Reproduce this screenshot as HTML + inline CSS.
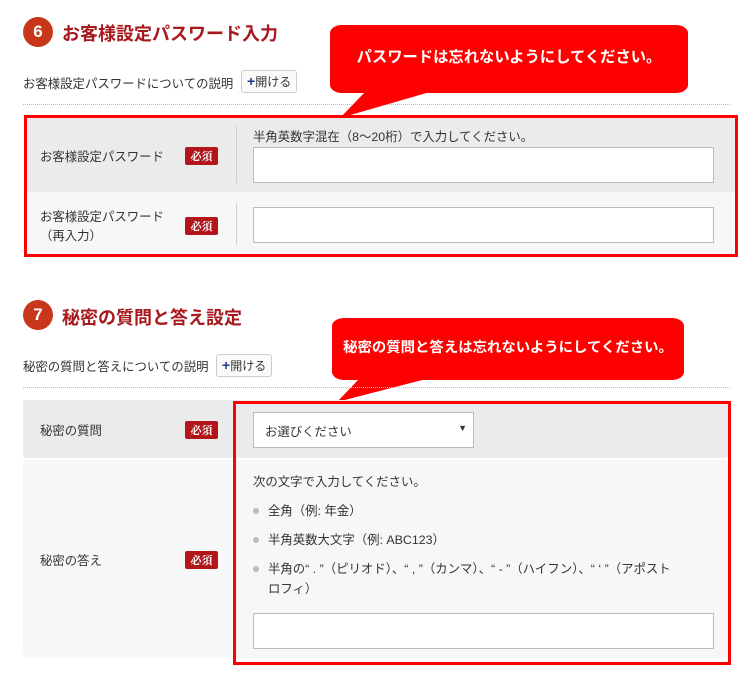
<!DOCTYPE html>
<html><head><meta charset="utf-8"><style>
*{margin:0;padding:0;box-sizing:border-box}
body{width:750px;height:678px;background:#fff;position:relative;overflow:hidden;font-family:"Liberation Sans","Noto Sans CJK JP",sans-serif;color:#333;font-size:12.4px}
.a{position:absolute;white-space:nowrap}
.num{width:30px;height:30px;border-radius:50%;background:#c8371a;color:#fff;font-weight:bold;font-size:17px;text-align:center;line-height:30px}
.ttl{font-size:18px;font-weight:bold;color:#a8191e}
.btn{border:1px solid #ccc;border-radius:3px;background:#fafafa;font-size:12px;height:23px;line-height:21px;padding:0 5px;color:#333}
.btn b{color:#1a3d8f;font-size:14px}
.dot{height:0;border-top:1px dotted #bbb}
.badge{background:#b3161a;color:#fff;font-weight:bold;font-size:11px;width:33px;height:18px;line-height:18px;text-align:center;border-radius:2px;font-family:"Noto Serif CJK SC",serif}
.inp{background:#fff;border:1px solid #bbb}
.red{border:3px solid #f00}
.call{background:#f00;color:#fff;font-weight:bold;text-align:center;border-radius:12px/8px}
.li{padding-left:15px}
.li:before{content:"";position:absolute;left:0;top:7px;width:6px;height:6px;border-radius:50%;background:#bbb}
</style></head><body>
<div class="a num" style="left:23px;top:17px">6</div>
<div class="a ttl" style="left:62px;top:20px">お客様設定パスワード入力</div>
<div class="a" style="left:23px;top:74px">お客様設定パスワードについての説明</div>
<div class="a btn" style="left:241px;top:70px"><b>+</b>開ける</div>
<div class="a dot" style="left:23px;top:104px;width:707px"></div>

<div class="a" style="left:27px;top:118px;width:708px;height:74px;background:#ebebeb"></div>
<div class="a" style="left:27px;top:192px;width:708px;height:62px;background:#f7f7f7"></div>
<div class="a" style="left:236px;top:125px;width:1px;height:58px;background:#d0d0d0"></div>
<div class="a" style="left:236px;top:203px;width:1px;height:42px;background:#d0d0d0"></div>
<div class="a" style="left:40px;top:147px">お客様設定パスワード</div>
<div class="a badge" style="left:185px;top:147px">必須</div>
<div class="a" style="left:253px;top:127px">半角英数字混在（8～20桁）で入力してください。</div>
<div class="a inp" style="left:253px;top:147px;width:461px;height:36px"></div>
<div class="a" style="left:40px;top:207px">お客様設定パスワード</div>
<div class="a" style="left:40px;top:226px">（再入力）</div>
<div class="a badge" style="left:185px;top:217px">必須</div>
<div class="a inp" style="left:253px;top:207px;width:461px;height:36px"></div>
<div class="a red" style="left:24px;top:115px;width:714px;height:142px"></div>

<svg class="a" style="left:0;top:0" width="750" height="678"><polygon points="365,92 430,92 340,118" fill="#f00"/><polygon points="360,378 430,378 337,402" fill="#f00"/></svg>
<div class="a call" style="left:330px;top:25px;width:358px;height:68px;line-height:66px;font-size:15.3px">パスワードは忘れないようにしてください。</div>

<div class="a num" style="left:23px;top:300px">7</div>
<div class="a ttl" style="left:62px;top:304px">秘密の質問と答え設定</div>
<div class="a" style="left:23px;top:357px">秘密の質問と答えについての説明</div>
<div class="a btn" style="left:216px;top:354px"><b>+</b>開ける</div>
<div class="a dot" style="left:23px;top:387px;width:707px"></div>

<div class="a" style="left:23px;top:400px;width:705px;height:58px;background:#ebebeb;border-radius:3px"></div>
<div class="a" style="left:23px;top:460px;width:705px;height:198px;background:#f7f7f7;border-radius:3px"></div>
<div class="a" style="left:40px;top:421px">秘密の質問</div>
<div class="a badge" style="left:185px;top:421px">必須</div>
<div class="a inp" style="left:253px;top:412px;width:221px;height:36px;padding:9px 11px;font-size:12.4px">お選びください<span style="position:absolute;right:6px;top:10px;font-size:9px">▼</span></div>
<div class="a" style="left:40px;top:551px">秘密の答え</div>
<div class="a badge" style="left:185px;top:551px">必須</div>
<div class="a" style="left:253px;top:472px">次の文字で入力してください。</div>
<div class="a li" style="left:253px;top:501px">全角（例: 年金）</div>
<div class="a li" style="left:253px;top:530px">半角英数大文字（例: ABC123）</div>
<div class="a li" style="left:253px;top:559px;line-height:20px">半角の“ . ”（ピリオド）、“ , ”（カンマ）、“ - ”（ハイフン）、“ ‘ ”（アポスト<br>ロフィ）</div>
<div class="a inp" style="left:253px;top:613px;width:461px;height:36px"></div>
<div class="a red" style="left:233px;top:401px;width:498px;height:264px"></div>
<div class="a call" style="left:332px;top:318px;width:352px;height:62px;line-height:60px;font-size:14.4px">秘密の質問と答えは忘れないようにしてください。</div>
</body></html>
